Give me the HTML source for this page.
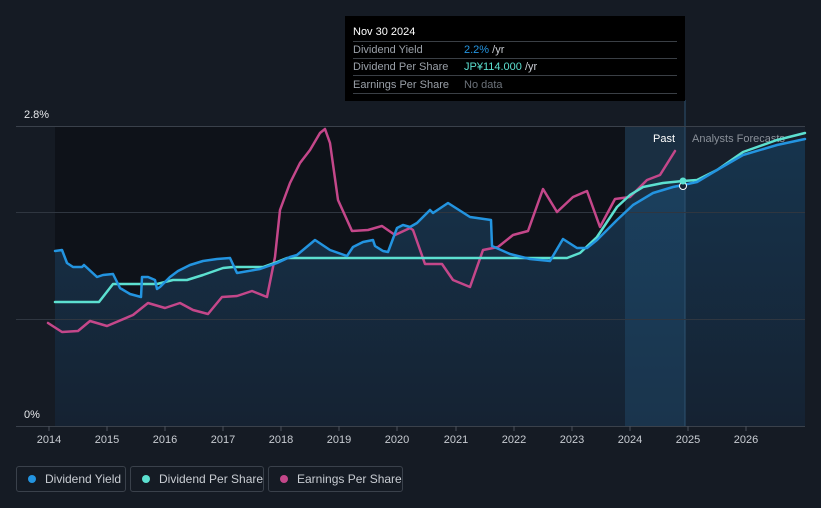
<!DOCTYPE html>
<html><head><meta charset="utf-8"><style>
html,body{margin:0;padding:0;background:#151b24;width:821px;height:508px;overflow:hidden;font-family:"Liberation Sans",sans-serif}
.lg{position:absolute;top:466px;height:26px;border:1px solid #3a414b;border-radius:3px;box-sizing:border-box;color:#c8ccd2;font-size:12px;line-height:24px}
.lg i{position:absolute;left:11px;top:8px;width:8px;height:8px;border-radius:50%}
.lg span{position:absolute;left:28px;top:0;white-space:nowrap}
</style></head><body>
<svg width="821" height="508" style="position:absolute;left:0;top:0" font-family="Liberation Sans, sans-serif">
<defs>
<linearGradient id="ar" x1="0" y1="0" x2="0" y2="1"><stop offset="0" stop-color="#16344d"/><stop offset="1" stop-color="#152232"/></linearGradient>
</defs>
<rect x="55" y="126" width="570" height="300" fill="#0e1219"/>
<rect x="685" y="126" width="120" height="300" fill="#171f2b"/>
<polygon fill="url(#ar)" points="55,251 62,250 67,263 73,267 82,267 84,265 97,277 103,275 113,274 120,288 130,294 141,297 142,277 148,277 155,280 157,289 160,287 170,277 178,271 190,265 203,261 217,259 230,258 237,273 260,269 277,263 290,257 297,255 315,240 330,250 347,256 353,247 363,242 373,240 375,246 383,251 388,252 397,228 403,225 410,227 417,223 430,210 433,213 448,203 470,217 491,220 492,246 510,254 530,259 550,261 563,239 577,248 587,248 597,240 617,220 633,205 653,193 673,187 683,185 697,182 717,170 743,155 777,145 805,139 805,426 55,426"/>
<rect x="625" y="126" width="60" height="300" fill="#2a6a9a" opacity="0.25"/>
<line x1="685" y1="100" x2="685" y2="426" stroke="#2d5270" stroke-width="1"/>
<g stroke="#2f3640" stroke-width="1">
<line x1="16" y1="126.5" x2="805" y2="126.5" stroke="#3a414b"/>
<line x1="16" y1="212.5" x2="805" y2="212.5"/>
<line x1="16" y1="319.5" x2="805" y2="319.5"/>
<line x1="16" y1="426.5" x2="805" y2="426.5" stroke="#3a414b"/>
</g>
<g stroke="#4a515b"><line x1="49" y1="426" x2="49" y2="431"/><line x1="107" y1="426" x2="107" y2="431"/><line x1="165" y1="426" x2="165" y2="431"/><line x1="223" y1="426" x2="223" y2="431"/><line x1="281" y1="426" x2="281" y2="431"/><line x1="339" y1="426" x2="339" y2="431"/><line x1="397" y1="426" x2="397" y2="431"/><line x1="456" y1="426" x2="456" y2="431"/><line x1="514" y1="426" x2="514" y2="431"/><line x1="572" y1="426" x2="572" y2="431"/><line x1="630" y1="426" x2="630" y2="431"/><line x1="688" y1="426" x2="688" y2="431"/><line x1="746" y1="426" x2="746" y2="431"/></g>
<g fill="#c8ccd2" font-size="11" text-anchor="middle"><text x="49" y="443">2014</text><text x="107" y="443">2015</text><text x="165" y="443">2016</text><text x="223" y="443">2017</text><text x="281" y="443">2018</text><text x="339" y="443">2019</text><text x="397" y="443">2020</text><text x="456" y="443">2021</text><text x="514" y="443">2022</text><text x="572" y="443">2023</text><text x="630" y="443">2024</text><text x="688" y="443">2025</text><text x="746" y="443">2026</text></g>
<text x="24" y="118" fill="#e6e8eb" font-size="11">2.8%</text>
<text x="24" y="418" fill="#e6e8eb" font-size="11">0%</text>
<text x="675" y="142" fill="#ffffff" font-size="11" text-anchor="end">Past</text>
<text x="692" y="142" fill="#8a9099" font-size="11">Analysts Forecasts</text>
<g fill="none" stroke-width="2.5" stroke-linejoin="round" stroke-linecap="round">
<polyline stroke="#c4478a" points="48,323 62,332 78,331 90,321 107,326 133,315 148,303 165,308 180,303 193,310 208,314 222,297 237,296 252,291 267,297 275,257 280,210 290,183 300,163 310,150 320,133 325,129 330,143 338,200 352,231 368,230 382,226 395,235 410,228 413,230 425,264 442,264 453,280 470,287 483,250 498,247 513,235 528,231 543,189 557,212 573,197 587,191 600,227 615,199 630,197 647,180 660,175 675,151"/>
<polyline stroke="#5ce0d0" points="55,302 99,302 113,284 157,284 173,280 187,280 203,275 223,268 233,267 263,267 277,262 287,258 410,258 567,258 580,253 597,237 617,207 630,195 643,187 663,183 683,181 697,180 717,170 743,152 777,140 805,133"/>
<polyline stroke="#2394e0" points="55,251 62,250 67,263 73,267 82,267 84,265 97,277 103,275 113,274 120,288 130,294 141,297 142,277 148,277 155,280 157,289 160,287 170,277 178,271 190,265 203,261 217,259 230,258 237,273 260,269 277,263 290,257 297,255 315,240 330,250 347,256 353,247 363,242 373,240 375,246 383,251 388,252 397,228 403,225 410,227 417,223 430,210 433,213 448,203 470,217 491,220 492,246 510,254 530,259 550,261 563,239 577,248 587,248 597,240 617,220 633,205 653,193 673,187 683,185 697,182 717,170 743,155 777,145 805,139"/>
</g>
<circle cx="683" cy="186" r="3.5" fill="#152232" stroke="#fff" stroke-width="1"/>
<circle cx="683" cy="181" r="3.5" fill="#5ce0d0"/>
<rect x="345" y="16" width="340" height="85" fill="#000"/>
<g stroke="#3a3f45"><line x1="353" y1="41.5" x2="677" y2="41.5"/><line x1="353" y1="58.5" x2="677" y2="58.5"/><line x1="353" y1="75.5" x2="677" y2="75.5"/><line x1="353" y1="93.5" x2="677" y2="93.5"/></g>
<g font-size="11"><text x="353" y="35" fill="#fff">Nov 30 2024</text>
<text x="353" y="53" fill="#9aa0a8">Dividend Yield</text><text x="464" y="53" fill="#2394e0">2.2% <tspan fill="#c8ccd2">/yr</tspan></text>
<text x="353" y="70" fill="#9aa0a8">Dividend Per Share</text><text x="464" y="70" fill="#5ce0d0">JP¥114.000 <tspan fill="#c8ccd2">/yr</tspan></text>
<text x="353" y="88" fill="#9aa0a8">Earnings Per Share</text><text x="464" y="88" fill="#6c727a">No data</text></g>
</svg>
<div class="lg" style="left:16px;width:110px"><i style="background:#2394e0"></i><span>Dividend Yield</span></div>
<div class="lg" style="left:130px;width:134px"><i style="background:#5ce0d0"></i><span>Dividend Per Share</span></div>
<div class="lg" style="left:268px;width:135px"><i style="background:#c4478a"></i><span>Earnings Per Share</span></div>
</body></html>
